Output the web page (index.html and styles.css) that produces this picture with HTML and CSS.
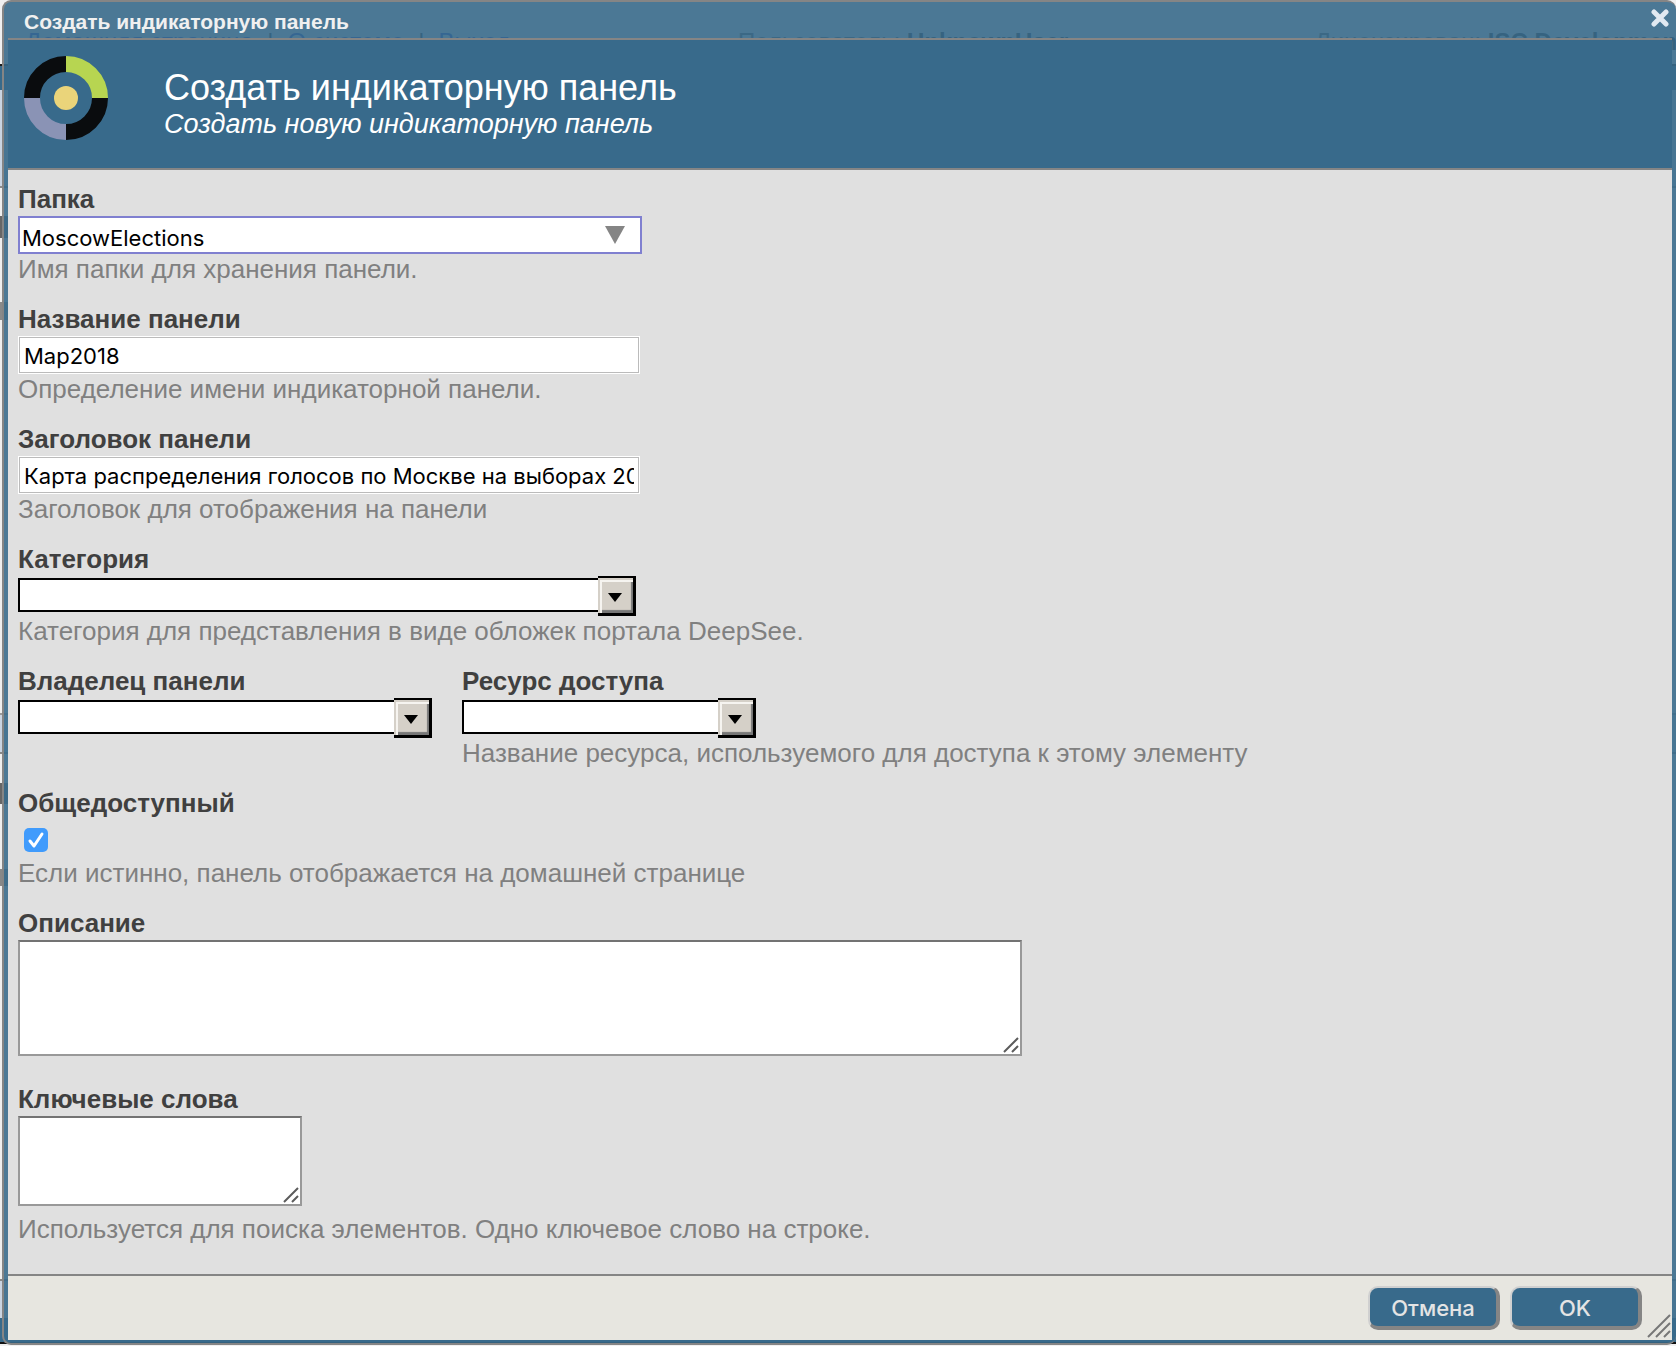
FILE: index.html
```html
<!DOCTYPE html>
<html lang="ru">
<head>
<meta charset="utf-8">
<meta name="viewport" content="width=device-width, initial-scale=1">
<title>Создать индикаторную панель</title>
<link rel="stylesheet" href="styles.css">
</head>
<body>
<div class="backdrop" aria-hidden="true">
  <div class="backdrop-links"><span>Домашняя страница</span><i>|</i><span>О системе</span><i>|</i><span>Выход</span></div>
  <div class="backdrop-info">Пользователь: <b>UnknownUser</b></div>
  <div class="backdrop-info">Лицензирован: <b>ISC Development</b></div>
</div>
<main class="dialog" role="dialog" aria-labelledby="dialog-title">
  <div class="titlebar">
    <span class="titlebar-text">Создать индикаторную панель</span>
    <button class="close" type="button" aria-label="Закрыть">
      <svg width="18" height="18" viewBox="0 0 18 18"><path d="M3 3 15 15M15 3 3 15" fill="none" stroke="#e1e9f1" stroke-width="5" stroke-linecap="round"/></svg>
    </button>
  </div>
  <header class="banner">
    <svg class="logo" width="84" height="84" viewBox="0 0 84 84">
      <g fill="none" stroke-width="16">
        <path d="M8 42A34 34 0 0 1 42 8" stroke="#0a0c0e"/>
        <path d="M42 8A34 34 0 0 1 76 42" stroke="#b7d551"/>
        <path d="M76 42A34 34 0 0 1 42 76" stroke="#0a0c0e"/>
        <path d="M42 76A34 34 0 0 1 8 42" stroke="#8a93b5"/>
      </g>
      <circle cx="42" cy="42" r="12" fill="#ead47a"/>
    </svg>
    <div class="banner-text">
      <h1 id="dialog-title">Создать индикаторную панель</h1>
      <p>Создать новую индикаторную панель</p>
    </div>
  </header>
  <form class="form" id="dashboard-form">
    <div class="field">
      <label for="folder">Папка</label>
      <div class="picker">
        <select id="folder"><option>MoscowElections</option></select>
        <svg width="20" height="18" viewBox="0 0 20 18"><path d="M0 0H20L10 18Z" fill="#858585"/></svg>
      </div>
      <p class="hint">Имя папки для хранения панели.</p>
    </div>
    <div class="field">
      <label for="name">Название панели</label>
      <input class="text" id="name" type="text" value="Map2018">
      <p class="hint">Определение имени индикаторной панели.</p>
    </div>
    <div class="field">
      <label for="caption">Заголовок панели</label>
      <input class="text" id="caption" type="text" value="Карта распределения голосов по Москве на выборах 2018">
      <p class="hint">Заголовок для отображения на панели</p>
    </div>
    <div class="field">
      <label for="category">Категория</label>
      <div class="combo combo-wide">
        <input id="category" type="text">
        <button type="button" aria-label="Выбрать категорию"><svg width="16" height="9" viewBox="0 0 16 9"><path d="M1 0H15L8 9Z"/></svg></button>
      </div>
      <p class="hint">Категория для представления в виде обложек портала DeepSee.</p>
    </div>
    <div class="row">
      <div class="field">
        <label for="owner">Владелец панели</label>
        <div class="combo combo-medium">
          <input id="owner" type="text">
          <button type="button" aria-label="Выбрать владельца"><svg width="16" height="9" viewBox="0 0 16 9"><path d="M1 0H15L8 9Z"/></svg></button>
        </div>
      </div>
      <div class="field">
        <label for="resource">Ресурс доступа</label>
        <div class="combo combo-narrow">
          <input id="resource" type="text">
          <button type="button" aria-label="Выбрать ресурс"><svg width="16" height="9" viewBox="0 0 16 9"><path d="M1 0H15L8 9Z"/></svg></button>
        </div>
        <p class="hint">Название ресурса, используемого для доступа к этому элементу</p>
      </div>
    </div>
    <div class="field">
      <label for="public">Общедоступный</label>
      <div class="check">
        <input id="public" type="checkbox" checked>
        <svg width="24" height="24" viewBox="0 0 24 24"><path d="M6 13 10 18 18 6" fill="none" stroke="#fff" stroke-width="3" stroke-linecap="round" stroke-linejoin="round"/></svg>
      </div>
      <p class="hint">Если истинно, панель отображается на домашней странице</p>
    </div>
    <div class="field">
      <label for="description">Описание</label>
      <div class="area area-wide">
        <textarea id="description"></textarea>
        <svg width="16" height="16" viewBox="0 0 16 16"><path d="M1 15 15 1M9 15 15 9" stroke="#5c5c5c" stroke-width="2"/></svg>
      </div>
    </div>
    <div class="field">
      <label for="keywords">Ключевые слова</label>
      <div class="area area-narrow">
        <textarea id="keywords"></textarea>
        <svg width="16" height="16" viewBox="0 0 16 16"><path d="M1 15 15 1M9 15 15 9" stroke="#5c5c5c" stroke-width="2"/></svg>
      </div>
      <p class="hint">Используется для поиска элементов. Одно ключевое слово на строке.</p>
    </div>
  </form>
  <footer class="actions">
    <button class="action" type="button">Отмена</button>
    <button class="action" type="submit" form="dashboard-form">OK</button>
    <svg class="grip" width="24" height="24" viewBox="0 0 24 24"><path d="M1 23 23 1M9 23 23 9M17 23 23 17" stroke="#777" stroke-width="2"/></svg>
  </footer>
</main>
</body>
</html>
```
FILE: styles.css
```css
* { box-sizing: border-box; }

body {
  margin: 0;
  min-height: 100vh;
  display: grid;
  font-family: "Liberation Sans", Arial, sans-serif;
  font-size: 26px;
  line-height: 30px;
  background:
    linear-gradient(transparent 216px, #666 216px 238px, transparent 238px 302px,
      #8a8a8a 302px 320px, transparent 320px 783px, #666 783px 804px,
      transparent 804px 869px, #888 869px 886px, transparent 886px) 0 0 / 8px 100% no-repeat,
    linear-gradient(#f0f0f0 0 64px, #1c1c1c 64px 66px, #386a8b 66px 90px,
      #c9d4e2 90px 186px, #8a8a8a 186px 188px, #eee 188px 713px,
      #999 713px 715px, #c9d4e2 715px 752px, #888 752px 754px,
      #eee 754px 1279px, #888 1279px 1281px, #c9d4e2 1281px 1318px,
      #386a8b 1318px 1342px, #111 1342px 1344px, #f0f0f0 1344px);
}

h1, p { margin: 0; font-weight: 400; }
button, input, select, textarea { margin: 0; font: inherit; }
svg { display: block; }

/* Page that shows through the dialog frame */
.backdrop {
  grid-area: 1 / 1;
  align-self: start;
  display: grid;
  grid-template-columns: 713px 577px 1fr;
  height: 64px;
  padding: 29px 0 0 25px;
  overflow: hidden;
  font-size: 24px;
  line-height: 26px;
  white-space: nowrap;
  color: #555;
}
.backdrop-links { display: flex; gap: 14px; color: #1440d0; }
.backdrop-links i { font-style: normal; color: #222; }
.backdrop b { color: #222; }

.dialog {
  grid-area: 1 / 1;
  position: relative;
  min-width: 0;
  margin: 0 0 1px 2px;
  padding: 0 4px 3px;
  display: flex;
  flex-direction: column;
  border: 2px solid #858585;
  border-right: 0;
  border-radius: 9px;
  background: rgb(56 106 139 / 90%);
}

.titlebar {
  display: flex;
  justify-content: space-between;
  align-items: flex-start;
  height: 36px;
  padding-left: 16px;
}
.titlebar-text {
  padding-top: 7px;
  font-size: 21px;
  line-height: 26px;
  font-weight: 700;
  color: #f0f0f0;
}
.close {
  padding: 7px 3px 0 0;
  border: 0;
  background: none;
}

.banner {
  display: flex;
  gap: 56px;
  height: 132px;
  padding: 16px;
  border: solid #858585;
  border-width: 2px 0;
  background: #386a8b;
  color: #fff;
}
.banner h1 { padding-top: 12px; font-size: 36px; line-height: 40px; }
.banner p { font-size: 27px; font-style: italic; line-height: 32px; }

.form {
  flex: 1;
  display: flex;
  flex-direction: column;
  gap: 20px;
  padding: 14px 10px 30px;
  background: #e0e0e0;
}
.field { display: flex; flex-direction: column; align-items: flex-start; }
.field label { margin-bottom: 2px; font-weight: 700; color: #404040; }
.hint { color: #808080; }
.row { display: flex; gap: 30px; }

.picker, .text, .combo, .area { max-width: 100%; }
.picker, .text, .combo { font-family: Inter, "Noto Sans", sans-serif; font-size: 22px; line-height: 26px; color: #000; }

.picker { display: grid; width: 624px; }
.picker select {
  grid-area: 1 / 1;
  appearance: none;
  height: 38px;
  padding: 6px 2px 0;
  border: 2px solid #8080d0;
  border-radius: 0;
  background: #fff;
  color: #000;
}
.picker svg { grid-area: 1 / 1; place-self: center end; margin-right: 17px; pointer-events: none; }

.text {
  width: 622px;
  height: 38px;
  padding: 1px 5px 0;
  border: 1px solid #fff;
  outline: 1px solid #bbb;
  outline-offset: -2px;
  background: #fff;
}

.combo { display: flex; height: 40px; }
.combo-wide { width: 618px; }
.combo-medium { width: 414px; }
.combo-narrow { width: 294px; }
.combo input {
  flex: 1;
  min-width: 0;
  height: 34px;
  margin-top: 2px;
  padding: 0 4px;
  border: 2px solid #000;
  border-right: 0;
  border-radius: 0;
  background: #fff;
}
.combo button {
  display: grid;
  place-items: center;
  width: 38px;
  height: 40px;
  padding: 4px 2px 0 0;
  border: solid #000;
  border-width: 2px 3px 3px 0;
  background: #d5d0c8;
  box-shadow: inset 2px 2px 0 #d5d0c8, inset 4px 4px 0 #f6f4f0, inset -2px -3px 1px #777;
}

.check { display: grid; height: 38px; padding: 8px 6px 0; }
.check input { grid-area: 1 / 1; appearance: none; width: 24px; height: 24px; border-radius: 5px; background: #409bfc; }
.check svg { grid-area: 1 / 1; pointer-events: none; }

.area { display: grid; margin-bottom: 8px; }
.area-wide { width: 1004px; height: 116px; }
.area-narrow { width: 284px; height: 90px; }
.area textarea {
  grid-area: 1 / 1;
  resize: none;
  padding: 4px;
  border: 2px solid #999;
  border-top-color: #737373;
  background: #fff;
}
.area svg { grid-area: 1 / 1; place-self: end; margin: 3px; pointer-events: none; }

.actions {
  display: flex;
  align-items: center;
  gap: 10px;
  height: 66px;
  padding-left: 10px;
  border-top: 2px solid #858585;
  background: #e7e6e0;
}
.action {
  width: 132px;
  height: 44px;
  padding: 2px 0 0;
  border: solid;
  border-width: 2px 4px 4px 2px;
  border-color: #d0d0d0 #858585 #858585 #d0d0d0;
  border-radius: 10px;
  background: #386a8b;
  color: #e4e4e4;
  font-family: Inter, "Noto Sans", sans-serif;
  font-size: 22px;
  font-weight: 500;
  line-height: 26px;
}
.action:first-child { margin-left: auto; }
.grip { align-self: flex-end; margin: 0 1px 2px -5px; }
```
